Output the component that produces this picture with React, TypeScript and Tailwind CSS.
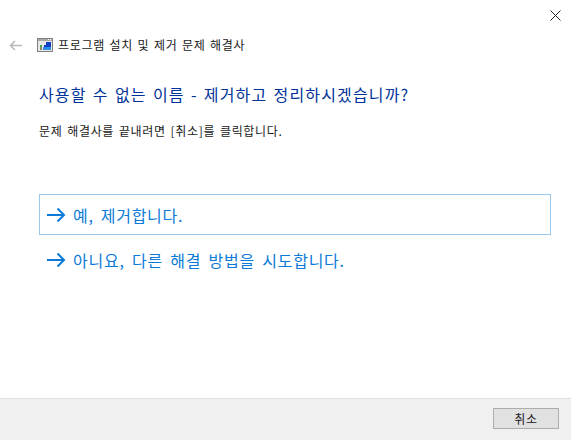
import React from 'react';

const KR = { fontFamily: '"Noto Sans CJK KR", "Liberation Sans", sans-serif' };

const ArrowIcon = () => (
  <svg width="19" height="16" viewBox="0 0 19 16" fill="none" stroke="#0b7ad8" strokeWidth="2" className="shrink-0">
    <path d="M0 8H17M10.5 1.5L17 8L10.5 14.5" />
  </svg>
);

const ProgramIcon = () => (
  <svg width="16" height="14" viewBox="0 0 16 14" className="shrink-0">
    <rect x="0.5" y="0.5" width="15" height="13" fill="#e8e8e8" stroke="#7f7f7f" />
    <rect x="1" y="1" width="14" height="2" fill="#a8a8a8" />
    <rect x="11" y="1" width="1" height="1" fill="#ffffff" />
    <rect x="13" y="1" width="1" height="1" fill="#ffffff" />
    <path d="M7 12V7H9V4H14V12Z" fill="#0b3fc4" />
    <rect x="6" y="9" width="8" height="3" fill="#2f8fe8" />
    <rect x="3" y="7" width="2" height="2" fill="#3fae4a" />
    <rect x="3" y="9" width="2" height="3" fill="#8a8a6a" />
  </svg>
);

export default function App() {
  return (
    <div className="w-[571px] h-[440px] bg-white flex flex-col overflow-hidden" style={KR}>
      <div className="h-[398px] flex flex-col">
        {/* title bar */}
        <div className="h-[30px] flex justify-end items-start pt-[10px] pr-[10px]">
          <svg width="11" height="11" viewBox="0 0 11 11" stroke="#222" strokeWidth="1" fill="none">
            <path d="M0.5 0.5L10.5 10.5M10.5 0.5L0.5 10.5" />
          </svg>
        </div>

        {/* nav */}
        <div className="h-[30px] flex items-center pl-[9px]">
          <svg width="13" height="11" viewBox="0 0 13 11" fill="none" stroke="#b9b9b9" strokeWidth="1.6" className="shrink-0">
            <path d="M13 5.5H1.5M6 1L1.5 5.5L6 10" />
          </svg>
          <div className="ml-[15px]"><ProgramIcon /></div>
          <span className="ml-[5px] text-[12px] leading-[16px] text-[#1a1a1a] whitespace-nowrap tracking-[0.7px] [word-spacing:1.2px]">프로그램 설치 및 제거 문제 해결사</span>
        </div>

        {/* heading */}
        <div className="pl-[39px] pt-[23px]">
          <h1 className="text-[16px] leading-[22px] font-normal text-[#003399] whitespace-nowrap tracking-[1.15px] [word-spacing:1.5px]">사용할 수 없는 이름 - 제거하고 정리하시겠습니까?</h1>
          <p className="mt-[18px] text-[12px] leading-[16px] text-[#1a1a1a] whitespace-nowrap tracking-[0.66px] [word-spacing:1.5px]">문제 해결사를 끝내려면 [취소]를 클릭합니다.</p>
        </div>

        {/* options */}
        <div className="mt-[55px] ml-[39px] mr-[20px] flex flex-col">
          <div className="h-[41px] border border-[#99c8ec] flex items-center pl-[7px] gap-[7px]">
            <ArrowIcon />
            <span className="text-[16px] leading-[22px] text-[#0b7ad8] whitespace-nowrap tracking-[0.7px] [word-spacing:3px]">예, 제거합니다.</span>
          </div>
          <div className="h-[41px] mt-[4px] flex items-center pl-[8px] gap-[7px]">
            <ArrowIcon />
            <span className="text-[16px] leading-[22px] text-[#0b7ad8] whitespace-nowrap tracking-[0.75px] [word-spacing:3px]">아니요, 다른 해결 방법을 시도합니다.</span>
          </div>
        </div>
      </div>

      {/* footer */}
      <div className="h-[42px] bg-[#f0f0f0] border-t border-[#dfdfdf] flex justify-end items-start pt-[9px] pr-[12px]">
        <button className="w-[66px] h-[21px] bg-[#e1e1e1] border border-[#adadad] text-[12px] leading-[16px] text-[#1a1a1a] tracking-[0.7px]" style={KR}>취소</button>
      </div>
    </div>
  );
}
